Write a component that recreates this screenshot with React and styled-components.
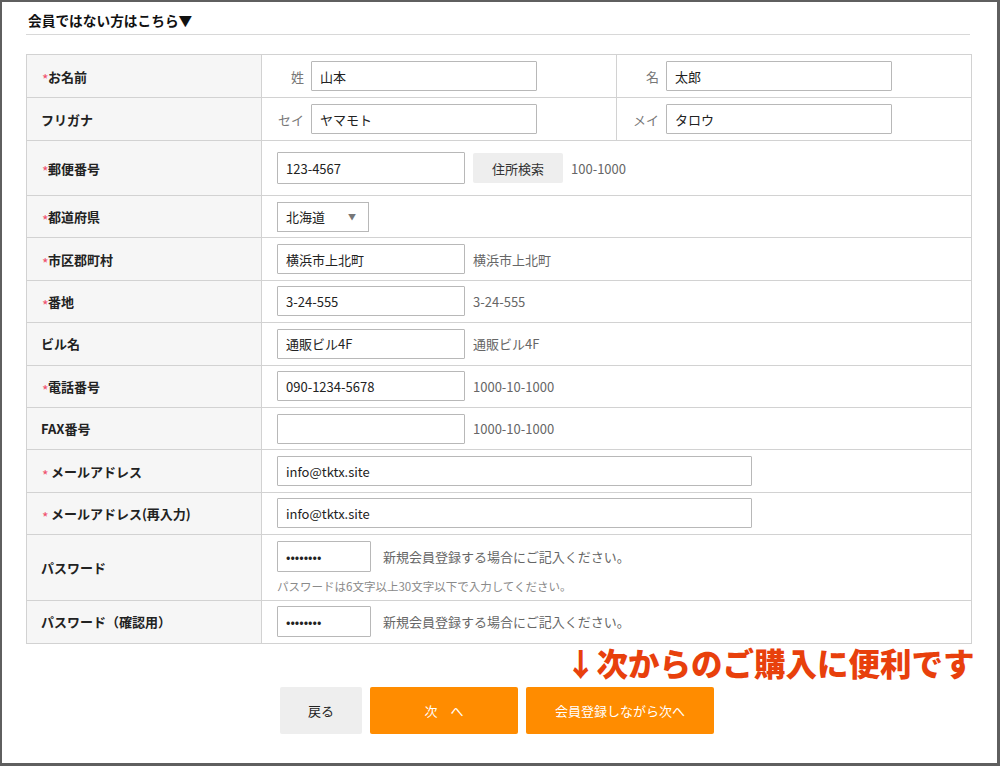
import React from "react";
import styled, {createGlobalStyle} from "styled-components";

const GlobalStyle = createGlobalStyle`
  html, body {
    margin: 0;
    padding: 0;
    background: #ffffff;
  }
  body {
    font-family: "Noto Sans CJK JP", "Liberation Sans", sans-serif;
    color: #222222;
  }
`;

const rows = [
  {label: "郵便番号", required: true, kind: "zip", value: "123-4567", note: "100-1000"},
  {label: "都道府県", required: true, kind: "select", value: "北海道"},
  {label: "市区郡町村", required: true, kind: "text", value: "横浜市上北町", note: "横浜市上北町"},
  {label: "番地", required: true, kind: "text", value: "3-24-555", note: "3-24-555"},
  {label: "ビル名", kind: "text", value: "通販ビル4F", note: "通販ビル4F"},
  {label: "電話番号", required: true, kind: "text", value: "090-1234-5678", note: "1000-10-1000"},
  {label: "FAX番号", kind: "text", value: "", note: "1000-10-1000"},
  {label: " メールアドレス", required: true, kind: "wide", value: "info@tktx.site"},
  {label: " メールアドレス(再入力)", required: true, kind: "wide", value: "info@tktx.site"}
];

const Star = () => <Req>*</Req>;

const App = () => {
  return (
    <Frame>
      <GlobalStyle />
      <Heading>会員ではない方はこちら▼</Heading>
      <Divider />
      <FormTable>
        <tbody>
          <tr>
            <Th><Star />お名前</Th>
            <Td $split>
              <Split>
                <Half><SubLabel>姓</SubLabel><Field $w={226} defaultValue="山本" /></Half>
                <Half $bordered><SubLabel>名</SubLabel><Field $w={226} defaultValue="太郎" /></Half>
              </Split>
            </Td>
          </tr>
          <tr>
            <Th>フリガナ</Th>
            <Td $split>
              <Split>
                <Half><SubLabel>セイ</SubLabel><Field $w={226} defaultValue="ヤマモト" /></Half>
                <Half $bordered><SubLabel>メイ</SubLabel><Field $w={226} defaultValue="タロウ" /></Half>
              </Split>
            </Td>
          </tr>
          {rows.map((r) => (
            <tr key={r.label}>
              <Th $tall={r.kind === "zip"}>{r.required && <Star />}{r.label}</Th>
              <Td>
                <Line>
                  {r.kind === "select" ? (
                    <Select>
                      <span>{r.value}</span>
                      <Caret>▼</Caret>
                    </Select>
                  ) : (
                    <Field
                      $w={r.kind === "wide" ? 475 : 188}
                      $h={r.kind === "zip" ? 32 : 30}
                      defaultValue={r.value}
                    />
                  )}
                  {r.kind === "zip" && <SearchButton>住所検索</SearchButton>}
                  {r.note && <Note>{r.note}</Note>}
                </Line>
              </Td>
            </tr>
          ))}
          <tr>
            <Th>パスワード</Th>
            <Td $pass>
              <Line>
                <Field $w={94} $h={31} type="password" defaultValue="password" />
                <Hint>新規会員登録する場合にご記入ください。</Hint>
              </Line>
              <SmallNote>パスワードは6文字以上30文字以下で入力してください。</SmallNote>
            </Td>
          </tr>
          <tr>
            <Th>パスワード（確認用）</Th>
            <Td>
              <Line>
                <Field $w={94} $h={31} type="password" defaultValue="password" />
                <Hint>新規会員登録する場合にご記入ください。</Hint>
              </Line>
            </Td>
          </tr>
        </tbody>
      </FormTable>
      <Promo>↓次からのご購入に便利です</Promo>
      <Buttons>
        <Button $w={82}>戻る</Button>
        <Button $w={148} $primary>次　へ</Button>
        <Button $w={188} $primary>会員登録しながら次へ</Button>
      </Buttons>
    </Frame>
  );
};

const Frame = styled.div`
  box-sizing: border-box;
  width: 1000px;
  height: 766px;
  border: 2px solid #5f5f5f;
  border-right-width: 3px;
  border-bottom-width: 3px;
  padding: 0 27px 0 24px;
  overflow: hidden;
`;

const Heading = styled.div`
  padding: 8px 0 0 2px;
  height: 22px;
  font-size: 13.7px;
  font-weight: 700;
  line-height: 20px;
  color: #111111;
`;

const Divider = styled.div`
  height: 1px;
  margin: 2px 0 0 0;
  background: #d8d8d8;
`;

const FormTable = styled.table`
  margin: 19px 0 0 0;
  width: 946px;
  border-collapse: collapse;
  font-size: 13px;
  table-layout: fixed;
`;

const Th = styled.th`
  width: 235px;
  height: ${props => props.$tall ? "55px" : "42.4px"};
  padding: 0 0 0 14px;
  box-sizing: border-box;
  text-align: left;
  font-weight: 700;
  font-size: 13px;
  color: #222222;
  background: #f6f6f6;
  border: 1px solid #d2d2d2;
  vertical-align: middle;
`;

const Td = styled.td`
  padding: ${props => props.$split ? "0" : props.$pass ? "6px 0 6px 15px" : "0 0 0 15px"};
  border: 1px solid #d2d2d2;
  vertical-align: middle;
`;

const Req = styled.span`
  display: inline-block;
  width: 7px;
  color: #f0506e;
  font-size: 14px;
  font-weight: 400;
  line-height: 13px;
  vertical-align: middle;
  transform: translate(1px, 2px);
`;

const Split = styled.div`
  display: flex;
  height: 42px;
`;

const Half = styled.div`
  flex: 1;
  display: flex;
  align-items: center;
  border-left: ${props => props.$bordered ? "1px solid #d2d2d2" : "none"};
`;

const SubLabel = styled.span`
  width: 42px;
  margin-right: 7px;
  text-align: right;
  color: #777777;
  font-size: 13px;
`;

const Line = styled.div`
  display: flex;
  align-items: center;
`;

const Field = styled.input`
  box-sizing: border-box;
  width: ${props => props.$w}px;
  height: ${props => props.$h || 30}px;
  padding: 0 8px;
  border: 1px solid #b8b8b8;
  border-radius: 1px;
  font-family: "Noto Sans CJK JP", "Liberation Sans", sans-serif;
  font-size: 13px;
  color: #222222;
  background: #ffffff;
  outline: none;
`;

const Select = styled.div`
  box-sizing: border-box;
  display: flex;
  align-items: center;
  justify-content: space-between;
  width: 92px;
  height: 30px;
  padding: 0 12px 0 8px;
  border: 1px solid #b8b8b8;
  font-size: 13px;
  color: #222222;
`;

const Caret = styled.span`
  font-size: 8px;
  color: #777777;
`;

const SearchButton = styled.button`
  margin-left: 8px;
  width: 90px;
  height: 30px;
  border: none;
  border-radius: 2px;
  background: #eeeeee;
  font-family: "Noto Sans CJK JP", "Liberation Sans", sans-serif;
  font-size: 13px;
  color: #333333;
`;

const Note = styled.span`
  margin-left: 8px;
  font-size: 13px;
  color: #666666;
`;

const Hint = styled.span`
  margin-left: 12px;
  font-size: 13px;
  color: #666666;
`;

const SmallNote = styled.div`
  margin-top: 6px;
  font-size: 11.5px;
  line-height: 16px;
  color: #8a8a8a;
`;

const Promo = styled.div`
  margin: 0 0 0 539px;
  height: 38px;
  font-size: 31.5px;
  font-weight: 900;
  line-height: 36px;
  color: #e8400c;
  white-space: nowrap;
`;

const Buttons = styled.div`
  display: flex;
  gap: 8px;
  margin: 5px 0 0 254px;
`;

const Button = styled.button`
  width: ${props => props.$w}px;
  height: 47px;
  border: none;
  border-radius: 2px;
  background: ${props => props.$primary ? "#ff8c00" : "#eeeeee"};
  color: ${props => props.$primary ? "#ffffff" : "#222222"};
  font-family: "Noto Sans CJK JP", "Liberation Sans", sans-serif;
  font-size: 13px;
`;

export default App;
